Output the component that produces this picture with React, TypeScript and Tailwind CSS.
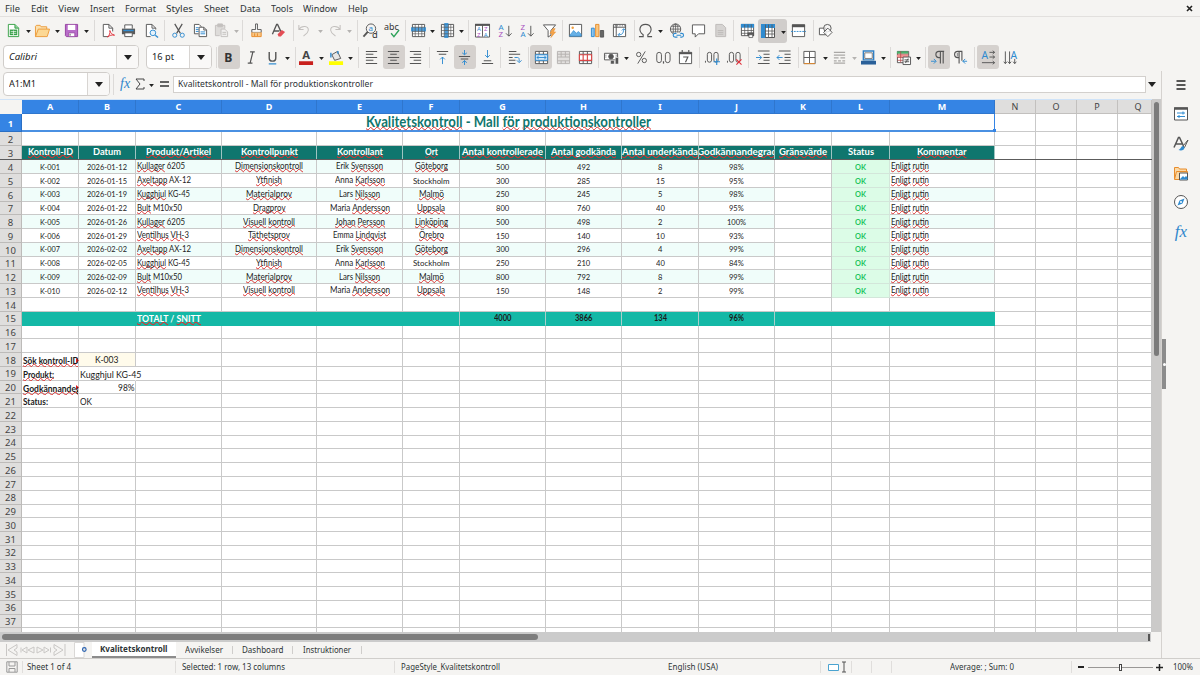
import React, { useLayoutEffect, useRef, useState } from "react";

type Node = React.ReactNode;

/* Text condensed or widened to a given width. "~" toggles the spelling mark. */
function Fit({ text, w, className = "" }: { text: string; w: number; className?: string }) {
  const ref = useRef<HTMLSpanElement>(null);
  const [k, setK] = useState(1);
  useLayoutEffect(() => {
    if (ref.current) setK(w / ref.current.getBoundingClientRect().width);
  }, []);
  return (
    <span className={"inline-flex shrink-0 justify-start whitespace-pre " + className} style={{ width: w }}>
      <span ref={ref} className="inline-block shrink-0 origin-left" style={{ transform: `scaleX(${k})` }}>
        {text.split("~").map((part, i) =>
          i % 2 === 1 ? (
            <span key={i} className="underline decoration-[#dc3030] decoration-wavy decoration-[0.7px] underline-offset-[-1px] [text-decoration-skip-ink:none]">
              {part}
            </span>
          ) : (
            part
          )
        )}
      </span>
    </span>
  );
}

/* Row of tools, each given by its centre, width and content. */
type Item = [number, number, Node];
function Strip({ items, className }: { items: Item[]; className: string }) {
  let end = 0;
  return (
    <div className={"flex shrink-0 items-center " + className}>
      {items.map(([c, w, node], i) => {
        const ml = c - w / 2 - end;
        end = c + w / 2;
        return (
          <div key={i} className="flex h-full shrink-0 items-center justify-center" style={{ width: w, marginLeft: ml }}>
            {node}
          </div>
        );
      })}
    </div>
  );
}

const Svg = ({ children, s = 16 }: { children: Node; s?: number }) => (
  <svg width={s} height={s} viewBox="0 0 16 16" fill="none" stroke="#555" strokeWidth="1" className="shrink-0 overflow-visible">
    {children}
  </svg>
);
const Caret = ({ off = false, big = false }: { off?: boolean; big?: boolean }) => (
  <svg width={big ? 8 : 5} height={big ? 5 : 3} viewBox="0 0 8 5" className="shrink-0">
    <path d="M0 0h8L4 5z" fill={off ? "#b5b3b1" : "#222"} />
  </svg>
);
const Sep = () => <div className="h-[21px] w-px bg-[#dcdad8]" />;
const Pressed = ({ children }: { children: Node }) => (
  <div className="flex h-[24px] w-[22px] items-center justify-center rounded-[3px] bg-[#d5d1ce]">{children}</div>
);
const sep = (x: number): Item => [x, 1, <Sep />];
const car = (x: number, off = false): Item => [x, 5, <div className="pt-[2px]"><Caret off={off} /></div>];
const ic = (x: number, n: Node): Item => [x, 16, <Svg s={15}>{n}</Svg>];
const on = (x: number, n: Node): Item => [x, 22, <Pressed><Svg s={15}>{n}</Svg></Pressed>];

const B = "#2f8bd0";
const P = "#a94fc0";
const glyph = (x: number, y: number, t: string, fill: string, size: number, extra = "") => (
  <text x={x} y={y} fill={fill} stroke="none" fontSize={size} className={"font-['Noto_Sans',sans-serif] " + extra}>{t}</text>
);

const tools1: Item[] = [
  ic(13, <><path d="M2.5 1.5h7l4 4v9h-11z" fill="#fff" stroke="#37a048" /><path d="M9.5 1.5v4h4" stroke="#37a048" fill="#8ed39a" /><path d="M4 7h8v6H4z" fill="#37a048" stroke="none" /><path d="M5 9h6M5 11h6M8 8v5" stroke="#fff" strokeWidth=".7" /></>),
  car(28),
  ic(42, <><path d="M.5 14.500V3.500l1-1h4l1 1.500h6v3" fill="#fbe0ae" stroke="#ec9b3a" /><path d="M.5 14.500l3-8h12l-2.500 8z" fill="#fcd894" stroke="#ec9b3a" /></>),
  car(57),
  ic(71.5, <><path d="M1.500 1.500h13v13h-12l-1-1z" fill="#b86cc9" stroke="#94409f" /><path d="M4 2h8v5.500H4z" fill="#fff" stroke="none" /><path d="M5 10.500h6.500v4H5z" fill="#fff" stroke="#94409f" strokeWidth=".8" /><path d="M6.500 11.500v2" /></>),
  car(86.5),
  sep(94),
  ic(107.5, <><path d="M9 14.500H3.500v-13h6l4 4V9" fill="#fff" /><path d="M9.500 1.500v4h4" /><path d="M8 15c2-2 3-4 2.500-7 1 3 2 4 5 5-3-.5-5 0-7.500 2z" stroke="#e0303a" /></>),
  ic(128.5, <><path d="M4 6V2h8v4" fill="#fff" /><path d="M1 6h14v6H1z" fill="#5a5a5a" stroke="none" /><path d="M2.500 8h11" stroke={B} strokeWidth="1.500" /><path d="M4 10.500h8v4H4z" fill="#fff" /></>),
  ic(151, <><path d="M7 14.500H2.500v-13h6l4 4V7" fill="#fff" /><path d="M8.500 1.500v4h4" /><circle cx="9.500" cy="10.500" r="3" stroke={B} fill="#e5f2fb" /><path d="M12 13l3 2.500" stroke={B} strokeWidth="1.500" /></>),
  sep(164),
  ic(178, <><path d="M4 1l6 10M12 1L6 11" strokeWidth="1.300" /><circle cx="4" cy="13" r="2.200" stroke={B} /><circle cx="12" cy="13" r="2.200" stroke={B} /></>),
  ic(200, <><path d="M6 11.500H1.500v-10h5l2 2v1.500" fill="#fff" /><path d="M3 5h3M3 7h3M3 9h3" stroke={B} /><path d="M6.500 4.500h5l3 3v7h-8z" fill="#fff" /><path d="M11.500 4.500v3h3" /><path d="M8 9.500h5M8 11.500h5" stroke={B} /></>),
  ic(221.5, <g stroke="#c3c0be"><path d="M6 13.500H1.500v-11h10V6" fill="#dedcda" /><path d="M4 1h5v3H4z" fill="#c3c0be" /><path d="M7.500 6.500h4l3 3v5h-7z" fill="#f1f0ef" /><path d="M9 10h4M9 12h4" /></g>),
  car(236, true),
  sep(242),
  ic(256, <><path d="M7 1h2v6h4v3H3V7h4z" fill="#fff" /><path d="M3 10v4.500h10V10" fill="#f9c684" stroke="#e88c2b" /><path d="M6 11v3M9 11v3" stroke="#e88c2b" /></>),
  ic(278, <><path d="M1.500 12L6 1.500h1L11 10M3 8.500h6" strokeWidth="1.400" /><path d="M7 12l4.500-4.500 3.500 2-4.500 5H8z" fill="#e44d55" stroke="none" /></>),
  sep(293),
  ic(304.5, <path d="M2 2v5h5M2 7c3-5 11-4 10 1-.5 3-3 4-5 6" stroke="#c3c0be" strokeWidth="1.100" />),
  car(320, true),
  ic(334, <path d="M14 2v5H9M14 7C11 2 3 3 4 8c.5 3 3 4 5 6" stroke="#c3c0be" strokeWidth="1.100" />),
  car(349, true),
  sep(357),
  ic(370, <><circle cx="8.500" cy="6" r="5" /><path d="M5 9.500L.5 14.500" strokeWidth="2" />{glyph(5.8, 8.5, "a", B, 8.5)}{glyph(9.5, 15.5, "d", "#333", 10)}</>),
  ic(392, <>{glyph(-1, 7.5, "abc", "#333", 9.5)}<path d="M6.500 11l3 3.500 5.500-7" stroke="#2fa35a" strokeWidth="1.500" /></>),
  sep(405),
  ic(418, <><path d="M1.500 1.500h13v13h-13z" fill="#fff" /><path d="M0 4.500h16v4.500H0z" fill={B} stroke="none" opacity=".85" /><path d="M1.500 4.500h13M1.500 9h13M1.500 11.500h13M4.500 1.500v13M8 1.500v13M11.500 1.500v13" strokeWidth=".7" /></>),
  car(432.5),
  ic(447, <><path d="M1.500 1.500h13v13h-13z" fill="#fff" /><path d="M4.500 0h4.500v16H4.500z" fill={B} stroke="none" opacity=".85" /><path d="M1.500 4.500h13M1.500 8h13M1.500 11.500h13M4.500 1.500v13M9 1.500v13M11.500 1.500v13" strokeWidth=".7" /></>),
  car(461.5),
  sep(468),
  ic(482, <><path d="M.5 1.500h15v13.500H.5zM8 2v12.500" fill="#fff" /><path d="M0 2h16" strokeWidth="2.200" />{glyph(2, 9, "A", B, 6.5)}{glyph(2.2, 14.6, "Z", P, 6.5)}{glyph(9.6, 9, "Z", P, 6.5)}{glyph(9.4, 14.6, "A", B, 6.5)}</>),
  ic(505, <>{glyph(0.5, 7, "A", B, 8.5)}{glyph(0.5, 15, "Z", P, 8.5)}<path d="M11.500 3v11M8.500 11l3 3 3-3" /></>),
  ic(527, <>{glyph(0.5, 7, "Z", P, 8.5)}{glyph(0.5, 15, "A", B, 8.5)}<path d="M11.500 3v11M8.500 11l3 3 3-3" /></>),
  ic(549, <><path d="M1.500 2h13l-5 6v5l-3 2V8z" fill="#fff" /><path d="M11.500 6l-3 5h2.500l-1.500 4.500 5-6H12l2-3.500z" fill="#f7a54a" stroke="#e88c2b" strokeWidth=".6" /></>),
  sep(562),
  ic(575.5, <><path d="M1.500 1.500h13v13h-13z" fill="#fff" /><path d="M2 13l4-5 3 3 2-2 3 3v2H2z" fill="#67b0e6" stroke={B} strokeWidth=".7" /><circle cx="5" cy="5" r="1.300" fill="#f0a040" stroke="none" /></>),
  ic(597.5, <><path d="M1.500 5.500h3v9h-3z" fill="#8cc4ee" stroke={B} /><path d="M6 1.500h3.500v13H6z" fill="#fac880" stroke="#e88c2b" /><path d="M11 8h3.500v7H11z" fill="#666" stroke="#555" /></>),
  ic(619.5, <><path d="M1.500 1.500h13v13h-13z" fill="#fff" /><path d="M1.500 4.500h13M4.500 1.500v13" /><path d="M3 3h11" strokeDasharray="1 1.500" /><path d="M7 12.500c4 0 5-1 5.500-6M10.500 8l2-2 2 2M8.500 10.500l-2 2 2 2" stroke={B} /></>),
  sep(634),
  ic(645, <path d="M1 14.500h4.500v-2C-.5 8 2 1.500 8 1.500s8.500 6.500 2.500 11v2H15" strokeWidth="1.200" />),
  car(660.5),
  ic(676, <><circle cx="7" cy="6.500" r="5.500" /><path d="M1.500 6.500h11M7 1v11M2.500 3.500h9M2.500 9.500h9" strokeWidth=".8" /><ellipse cx="7" cy="6.500" rx="2.500" ry="5.500" strokeWidth=".8" /><path d="M5 10.200h10v5.500H5z" fill="#f5f4f2" stroke="none" /><path d="M8 11H6.500a2 2 0 000 4H9M12 11h1.500a2 2 0 010 4H12M8 13h5" stroke={B} strokeWidth="1.200" /></>),
  ic(698, <path d="M1.500 2h13v9.500H8L4.500 15v-3.500h-3z" fill="#fff" />),
  ic(720, <><path d="M3 1.500h7l3.500 3.500v9.500H3z" fill="#d6d4d2" stroke="#bdbab8" /><path d="M5 8h6M5 10h6M5 12h6" stroke="#bdbab8" /></>),
  sep(733),
  ic(747, <><path d="M1.500 1.500h13v12h-13z" fill="#fff" /><path d="M1 1h14v4H1z" fill={B} stroke="none" /><path d="M1.500 8h13M1.500 11h13M5 1.500v12M8.500 1.500v12M12 1.500v12" strokeWidth=".8" /><path d="M8 10h7v4H8z" fill="#555" stroke="none" /><path d="M9.500 12.500h4v3h-4z" fill="#fff" strokeWidth=".8" /></>),
  [772.5, 29, <div className="flex h-[24px] w-[29px] items-center gap-[5px] rounded-[3px] bg-[#d0cdcb] pl-[2px]"><Svg><path d="M1.500 1.500h13v13h-13z" fill="#fff" /><path d="M1 1h14v4H1zM1 1h4.500v14H1z" fill={B} stroke="none" /><path d="M5 8h9.500M5 11h9.500M8.500 1.500v13M12 1.500v13M5.500 1.500v13" strokeWidth=".8" /></Svg><div className="pt-[3px]"><Caret /></div></div>],
  ic(798, <><path d="M1.500 2h13v12.500h-13z" fill="#fff" /><path d="M1 3h14" strokeWidth="3" /><path d="M0 9h16" stroke={B} strokeDasharray="2 1" /></>),
  sep(813),
  ic(825.5, <><path d="M1.500 5.500h7v7h-7z" fill="#fff" /><circle cx="10" cy="5.500" r="4" fill="#f5f4f3" fillOpacity=".7" /><path d="M10.500 5.500l4.500 4.500-4.500 4.500L6 10z" fill="#fff" fillOpacity=".8" /></>),
];

const L = (d: string) => <path d={d} strokeWidth="1.100" />;
const tools2: Item[] = [
  [71, 136, <Combo text="Calibri" tw={28} italic w="w-[136px]" aw="w-[22px]" />],
  [179, 66, <Combo text="16 pt" tw={22} w="w-[66px]" aw="w-[22px]" />],
  sep(216),
  on(228.5, glyph(3.5, 12.8, "B", "#333", 13, "font-bold")),
  ic(251, <path d="M6.500 2h5M4 14h5M9.500 2L6.500 14" strokeWidth="1.300" />),
  ic(272, <><path d="M4.500 2v6.500c0 4.500 7 4.500 7 0V2" strokeWidth="1.500" /><path d="M4 14.800h8" stroke={B} strokeWidth="1.300" /></>),
  car(287),
  sep(295),
  ic(306, <>{glyph(3.5, 9.5, "A", "#444", 12, "font-bold")}<path d="M0 12h15v4H0z" fill="#c9211e" stroke="none" /></>),
  car(321.5),
  ic(336, <><path d="M3 5l6-3.500L12.500 9 6 11z" fill="#e6e6e6" /><path d="M9.500 1v3M2 3v5" stroke={B} strokeWidth="1.500" /><path d="M0 12h15v4H0z" fill="#ffff00" stroke="none" /></>),
  car(350.5),
  sep(358),
  ic(371.5, L("M2 1.500h12M2 4.500h8M2 8h12M2 11h8M2 14.500h12")),
  on(393.5, L("M2 1.500h12M4.500 4.500h7M2 8h12M4.500 11h7M2 14.500h12")),
  ic(415, L("M2 1.500h12M6 4.500h8M2 8h12M6 11h8M2 14.500h12")),
  sep(429),
  ic(442.5, <>{L("M2 1.500h12M4 4.500h8")}<path d="M8 15V7.500M5.500 10L8 7.500l2.500 2.500" stroke={B} /></>),
  on(464.5, <>{L("M2 7h12M4 9.500h8")}<path d="M8 0v5M5.500 3L8 5l2.500-2M8 16v-5M5.500 13.500L8 11.500l2.500 2" stroke={B} /></>),
  ic(487, <>{L("M4 11.500h8M2 14.500h12")}<path d="M8 0v8M5.500 5.500L8 8l2.500-2.500" stroke={B} /></>),
  sep(500),
  ic(514, <>{L("M2 1.500h8M2 4.500h12M2 8h4M2 11h7M2 14.500h7")}<path d="M8 8h3c2 0 2 1 2 4.500M10.500 11l2.500 2.500 2.500-2.500" stroke={B} /></>),
  sep(528),
  on(541, <><path d="M1.500 1.500h13v13h-13zM1.500 4.500h13M1.500 11.500h13M5.500 1.500v3M10 1.500v3M5.500 11.500v3M10 11.500v3" fill="#fff" /><path d="M1.500 5h13v6h-13z" fill="#d6ebfa" stroke={B} /><path d="M3 8h10M5 6.500L3 8l2 1.500M11 6.500L13 8l-2 1.500" stroke={B} /></>),
  ic(563, <path d="M1.500 1.500h13v13h-13zM1.500 4.500h13M1.500 7.500h13M1.500 11.500h13M5.500 1.500v6M10 1.500v6M5.500 11.500v3M10 11.500v3" fill="#e2e0de" stroke="#b5b2b0" />),
  ic(585, <><path d="M1.500 1.500h13v13h-13zM1.500 4.500h13M5.500 1.500v13M10 1.500v13M1.500 11.500h13" fill="#fff" /><path d="M1.500 5h13v6h-13zM5.500 5v6M10 5v6" fill="#fff" stroke="#d94545" strokeWidth="1.200" /></>),
  sep(598),
  ic(611, <><path d="M.5 3.500h14v7H.5z" fill="#fff" /><circle cx="7.500" cy="7" r="2.500" fill="#555" /><path d="M2 5v4M13 5v4" strokeDasharray="1 1" /><path d="M7 11h4v4H7zM12 8h3.500v7H12z" fill="#555" stroke="#f5f4f3" strokeWidth=".6" /></>),
  car(626),
  ic(641.5, <><circle cx="5" cy="4.800" r="2.300" /><circle cx="11" cy="11.200" r="2.300" /><path d="M12 1.500L4 14.500" /></>),
  ic(663.5, <><rect x=".8" y="2.500" width="5" height="11" rx="2.500" /><rect x="10" y="2.500" width="5" height="11" rx="2.500" /><path d="M8 12v2.500" strokeWidth="1.300" /></>),
  ic(685.5, <><path d="M1.500 2.500h13v12h-13z" fill="#fff" /><path d="M1 3.500h14" strokeWidth="2" /><path d="M4.500 0v2M11.500 0v2M5.500 7.500h5l-2.500 5.500" strokeWidth="1.200" /></>),
  sep(699),
  ic(712.5, <><path d="M.5 11.500v2" /><rect x="2.500" y="2.500" width="4.500" height="10.500" rx="2.200" /><rect x="9.500" y="2.500" width="4.500" height="10.500" rx="2.200" /><path d="M12.500 9v7M9 12.500h7" stroke={B} strokeWidth="1.200" /></>),
  ic(734.5, <><path d="M.5 11.500v2" /><rect x="2.500" y="2.500" width="4.500" height="10.500" rx="2.200" /><rect x="9.500" y="2.500" width="4.500" height="10.500" rx="2.200" /><path d="M10 10l5.500 5.500M15.500 10L10 15.500" stroke="#e0303a" strokeWidth="1.200" /></>),
  sep(748),
  ic(763, <>{L("M2 1h12.500M8 4.500h6.500M8 8h6.500M8 11h6.500M2 14.500h12.500")}<path d="M0 8h6M3.500 5.500L6 8l-2.500 2.500" stroke={B} /></>),
  ic(784, <>{L("M2 1h12.500M8 4.500h6.500M8 8h6.500M8 11h6.500M2 14.500h12.500")}<path d="M0 8h6M2.500 5.500L0 8l2.500 2.500" stroke={B} /></>),
  sep(798),
  ic(809.5, <><path d="M2 1.500h12v13H2zM8 2v12M2 8h12" fill="#fff" /><path d="M2 14.500h12" stroke="#e88c2b" /></>),
  car(825),
  ic(839, <path d="M2 2.500h12M2 5.500h12M2 8.500h5M9 8.500h5M2 11.500h3M6.500 11.500h3M11 11.500h3M2 14h12" stroke="#aaa8a6" strokeWidth="1.300" />),
  car(854, true),
  ic(868, <><path d="M2.500 1h11v9.500h-11z" fill="#fff" stroke="#2f7fc4" strokeWidth="1.500" /><path d="M4 3h8v6H4z" stroke="#777" /><path d="M0 11.500h16v4H0z" fill="#2a6099" stroke="none" /></>),
  car(883),
  sep(890),
  ic(903, <><path d="M1.500 1.500h12v12h-12z" fill="#fff" /><path d="M1 1.500h12v2.500H1z" fill="#46b36b" stroke="none" /><path d="M1 5h12v2.500H1z" fill="#f09090" stroke="none" /><path d="M1.500 4.500h12M1.500 8h12M1.500 11h8M5 1.500v12" stroke="#b5484a" strokeWidth=".8" /><path d="M7.500 7.500h8v8h-8z" fill="#fff" /><path d="M9 10.500h5M9 12.500h5M13 9l-3 5" /></>),
  car(918),
  sep(925),
  on(938.5, <><path d="M14 1.500H8.500a3.300 3.300 0 000 6.600H10M10 1.500v13M13 1.500v13" strokeWidth="1.200" /><path d="M0 12h5M3 9.500L5.500 12 3 14.500" stroke={B} /></>),
  ic(960.5, <><path d="M10 1.500H5a3.300 3.300 0 000 6.600h1.500M6.500 1.500v13M9.500 1.500v10" strokeWidth="1.200" /><path d="M4 3h2v4H4z" fill="#999" stroke="none" /><path d="M15 12h-4.500M13 9.500L10.500 12l2.500 2.500" stroke={B} /></>),
  sep(974),
  on(988, <>{glyph(0.5, 10, "A", B, 11)}<path d="M9 2.500h5.500M12.500.8l2 1.700-2 1.700M9 7.500h5.500M12.500 5.800l2 1.700-2 1.700M1 13.500h13.500M12.500 11.800l2 1.700-2 1.700" /></>),
  ic(1010, <>{glyph(8, 9.5, "A", B, 11)}<path d="M2.500 1.500v13M.8 12.500l1.700 2 1.700-2M7 1.500v13M5.300 12.500l1.700 2 1.700-2M12.500 9.500v5M10.800 12.500l1.700 2 1.700-2" /></>),
];

function Combo({ text, tw, w, aw, italic }: { text: string; tw: number; w: string; aw: string; italic?: boolean }) {
  return (
    <div className={"flex h-[24px] overflow-hidden rounded-[4px] border border-[#d0cdca] bg-white text-[9.800px] text-[#222] " + w}>
      <div className="flex grow items-center pl-[5px]">
        <Fit text={text} w={tw} className={italic ? "italic" : ""} />
      </div>
      <div className={"flex items-center justify-center border-l border-[#d8d5d2] bg-[#f9f8f7] " + aw}>
        <Caret big />
      </div>
    </div>
  );
}

const Fx = ({ className }: { className: string }) => (
  <span className={"font-['Liberation_Serif',serif] italic leading-none text-[#2f86cc] " + className}>fx</span>
);

const cols: [string, string][] = [
  ["A", "w-[57px]"], ["B", "w-[57px]"], ["C", "w-[86px]"], ["D", "w-[95px]"], ["E", "w-[86px]"], ["F", "w-[57px]"],
  ["G", "w-[86px]"], ["H", "w-[76px]"], ["I", "w-[77px]"], ["J", "w-[76px]"], ["K", "w-[57px]"], ["L", "w-[58px]"],
  ["M", "w-[105px]"], ["N", "w-[41px]"], ["O", "w-[41px]"], ["P", "w-[41px]"], ["Q", "w-[34px]"],
];

const heads: [string, number, boolean?][] = [
  ["~Kontroll-ID~", 45], ["Datum", 28, true], ["~Produkt/Artikel~", 65], ["~Kontrollpunkt~", 57], ["~Kontrollant~", 46],
  ["~Ort~", 13], ["~Antal kontrollerade~", 81], ["~Antal godkända~", 65], ["~Antal underkända~", 76], ["~Godkännandegrad~", 80],
  ["~Gränsvärde~", 48], ["Status", 26, true], ["~Kommentar~", 49.5],
];

const products: Record<string, [string, number]> = {
  k: ["~Kullager~ 6205", 48], a: ["~Axeltapp~ AX-12", 54], g: ["~Kugghjul~ KG-45", 53], b: ["~Bult~ M10x50", 45], v: ["~Ventilhus~ ~VH-~3", 52],
};
const checks: Record<string, [string, number]> = {
  d: ["~Dimensionskontroll~", 68], y: ["~Ytfinish~", 26], m: ["~Materialprov~", 46], r: ["~Dragprov~", 32.5], v: ["~Visuell~ ~kontroll~", 52], t: ["~Täthetsprov~", 42],
};
const people: Record<string, [string, number]> = {
  e: ["Erik ~Svensson~", 47], a: ["Anna ~Karlsson~", 50], l: ["Lars ~Nilsson~", 41], m: ["Maria ~Andersson~", 60], j: ["~Johan~ ~Persson~", 50], q: ["Emma ~Lindqvist~", 53],
};
const places: Record<string, [string, number]> = {
  g: ["~Göteborg~", 33], s: ["Stockholm", 36.5], m: ["~Malmö~", 25], u: ["~Uppsala~", 28], l: ["~Linköping~", 33], o: ["~Örebro~", 25],
};
const rows: [string, string, string, string, string, string, string, string, string][] = [
  ["2026-01-12", "k", "d", "e", "g", "500", "492", "8", "98%"],
  ["2026-01-15", "a", "y", "a", "s", "300", "285", "15", "95%"],
  ["2026-01-19", "g", "m", "l", "m", "250", "245", "5", "98%"],
  ["2026-01-22", "b", "r", "m", "u", "800", "760", "40", "95%"],
  ["2026-01-26", "k", "v", "j", "l", "500", "498", "2", "100%"],
  ["2026-01-29", "v", "t", "q", "o", "150", "140", "10", "93%"],
  ["2026-02-02", "a", "d", "e", "g", "300", "296", "4", "99%"],
  ["2026-02-05", "g", "y", "a", "s", "250", "210", "40", "84%"],
  ["2026-02-09", "b", "m", "l", "m", "800", "792", "8", "99%"],
  ["2026-02-12", "v", "v", "m", "u", "150", "148", "2", "99%"],
];
const numW = (s: string) => (s.endsWith("%") ? (s.length - 1) * 4.3 + 6.2 : s.length * 4.4);

function Cell({ w, children, className = "", line = "border-[#c9c9c9]" }: { w: string; children?: Node; className?: string; line?: string }) {
  return (
    <div className={"flex h-full shrink-0 items-center border-r border-b " + w + " " + line + " " + className}>{children}</div>
  );
}

function content(n: number, c: number): { node?: Node; cls?: string; line?: string } {
  if (n === 3 && c < 13) {
    const [t, w, big] = heads[c];
    return {
      node: <Fit text={t} w={w} className={"font-bold text-white " + (big ? "text-[9.500px]" : "text-[8.500px]")} />,
      cls: "bg-[#0f766e] justify-center overflow-hidden " + (big ? "pb-[2px]" : "pb-px"),
      line: "border-r-[#9fc4c1] border-b-[#0f766e]",
    };
  }
  if (n >= 4 && n <= 13 && c < 13) {
    const r = rows[n - 4];
    const stripe = n % 2 === 0 && c !== 10 ? "bg-[#f0fdfa] " : "";
    const mid = stripe + "justify-center ";
    const id = "K-0" + String(n - 3).padStart(2, "0");
    const num = (t: string) => ({ node: <Fit text={t} w={numW(t)} className="text-[8px]" />, cls: mid });
    const named = ([t, w]: [string, number]) => ({
      node: <Fit text={t} w={w} className={t.includes("~") ? "text-[8.500px]" : "text-[8px]"} />,
      cls: mid,
    });
    switch (c) {
      case 0: return { node: <Fit text={id} w={20} className="text-[8px]" />, cls: mid };
      case 1: return { node: <Fit text={r[0]} w={40} className="text-[8px]" />, cls: mid };
      case 2: return { ...named(products[r[1]]), cls: stripe + "pl-[1px]" };
      case 3: return named(checks[r[2]]);
      case 4: return named(people[r[3]]);
      case 5: return named(places[r[4]]);
      case 6: return num(r[5]);
      case 7: return num(r[6]);
      case 8: return num(r[7]);
      case 9: return num(r[8]);
      case 11: return { node: <Fit text="OK" w={11} className="text-[8px] font-bold text-[#22c55e]" />, cls: "bg-[#dcfce7] justify-center", line: "border-[#d3e6da]" };
      case 12: return { node: <Fit text="~Enligt~ ~rutin~" w={38} className="text-[8.500px]" />, cls: stripe + "pl-px" };
      default: return {};
    }
  }
  if (n === 15 && c < 13) {
    const total = ["4000", "3866", "134", "96%"][c - 6];
    const edge = c >= 5 && c <= 9;
    return {
      node: c === 2 ? <Fit text="~TOTALT~ / ~SNITT~" w={64} className="text-[8.500px] font-bold text-white" />
        : total ? <Fit text={total} w={total === "4000" || total === "3866" ? 17.5 : total === "134" ? 13 : 15} className="text-[8.500px] font-bold" /> : null,
      cls: "bg-[#14b8a6] " + (c === 2 ? "pl-px pt-[3px]" : "justify-center"),
      line: (edge ? "border-r-[#a9cfca]" : "border-r-[#14b8a6]") + " border-b-[#14b8a6]",
    };
  }
  const label: Record<number, [string, number]> = {
    18: ["~Sök kontroll-ID:~", 58], 19: ["~Produkt:~", 31], 20: ["~Godkännandegrad:~", 72], 21: ["Status:", 25],
  };
  if (c === 0 && label[n]) {
    return {
      node: (
        <>
          <div className="flex h-[13px] w-[55px] shrink-0 items-center overflow-hidden pt-[2px]"><Fit text={label[n][0]} w={label[n][1]} className="text-[8.800px] font-bold" /></div>
          {n % 2 === 0 && <svg width="3" height="5" viewBox="0 0 3 5" className="-ml-[2px] shrink-0"><path d="M0 0v5l3-2.500z" fill="#e02020" /></svg>}
        </>
      ),
      cls: "pl-px pt-[2px]",
    };
  }
  if (c === 1) {
    if (n === 18) return { node: <Fit text="K-003" w={23.5} className="text-[9px]" />, cls: "bg-[#fffbeb] justify-center" };
    if (n === 19) return { node: <Fit text="Kugghjul KG-45" w={61.5} className="text-[9px]" />, cls: "pl-px pt-[2px]", line: "border-b-[#c9c9c9] border-r-transparent" };
    if (n === 20) return { node: <Fit text="98%" w={16.5} className="text-[9px]" />, cls: "justify-end pr-px pt-[1px]" };
    if (n === 21) return { node: <Fit text="OK" w={12} className="text-[9px]" />, cls: "pl-px pt-[1px]" };
  }
  return {};
}

function SheetRow({ n }: { n: number }) {
  return (
    <div className={"flex shrink-0 " + (n === 1 ? "h-[18px]" : n === 3 ? "h-[14.600px]" : "h-[13.770px]")}>
      <div className={"flex h-full w-[22px] shrink-0 items-center justify-center border-r border-b pt-[2px] text-[9.500px] leading-none font-['Noto_Sans',sans-serif] " + (n === 1 ? "border-[#2a6fc4] bg-[#3584e4] font-bold text-white" : "border-[#bdbbb9] bg-[#dfdedd] text-[#444]")}>
        {n <= 37 ? n : null}
      </div>
      {n === 1 ? (
        <>
          <div className="relative flex w-[973px] shrink-0 items-center justify-center border-r border-b-2 border-[#3584e4] border-b-[#4a90e2]">
            <Fit text="~Kvalitetskontroll~ - Mall ~för~ ~produktionskontroller~" w={285} className="text-[14.500px] font-bold text-[#0f766e]" />
            <div className="absolute -right-[2px] -bottom-[2px] size-[3px] bg-[#3584e4]" />
          </div>
          {cols.slice(13).map(([k, w]) => <Cell key={k} w={w} />)}
        </>
      ) : (
        cols.map(([k, w], c) => {
          const { node, cls, line } = content(n, c);
          return <Cell key={k} w={w} className={cls} line={line}>{node}</Cell>;
        })
      )}
    </div>
  );
}

const menus: [string, number][] = [
  ["File", 15], ["Edit", 17], ["View", 21], ["Insert", 24.5], ["Format", 31], ["Styles", 27], ["Sheet", 25], ["Data", 20.5], ["Tools", 22], ["Window", 34], ["Help", 20],
];

export default function App() {
  return (
    <div className="flex h-[675px] w-[1200px] flex-col overflow-hidden bg-[#f5f4f2] font-['Noto_Sans',sans-serif] text-[9.600px] leading-none text-[#2e3436]">
      <header className="flex h-[17px] shrink-0 items-center gap-[10.600px] border-b border-[#e2e0de] pt-px pl-[5px]">
        {menus.map(([t, w]) => <Fit key={t} text={t} w={w} />)}
        <svg width="7" height="7" viewBox="0 0 7 7" className="mr-[7px] ml-auto"><path d="M1 1l5 5M6 1L1 6" stroke="#222" strokeWidth="1.600" /></svg>
      </header>
      <Strip className="h-[27px]" items={tools1} />
      <Strip className="h-[27px] pb-px" items={tools2} />

      <div className="flex min-h-0 grow">
        <div className="flex w-[1161px] shrink-0 flex-col">
          <div className="flex h-[28px] shrink-0 items-center pb-[2px] pl-[3px]">
            <Combo text="A1:M1" tw={27} w="w-[107px]" aw="w-[22px]" />
            <div className="ml-[3px]"><Sep /></div>
            <Fx className="ml-[6px] w-[11px] text-[14px]" />
            <svg width="10" height="12" viewBox="0 0 10 12" className="ml-[4px]"><path d="M9 3V1H1l4 5-4 5h8V9" fill="none" stroke="#444" /></svg>
            <div className="ml-[4px] pt-[2px]"><Caret /></div>
            <svg width="9" height="6" viewBox="0 0 9 6" className="ml-[6px]"><path d="M0 1h9M0 5h9" stroke="#333" strokeWidth="1.400" /></svg>
            <div className="ml-[4px] flex h-[17px] w-[973px] items-center border border-[#d3d0cd] bg-white pl-[4px]">
              <Fit text="Kvalitetskontroll - Mall för produktionskontroller" w={195} />
            </div>
            <div className="ml-[2px]"><Caret big /></div>
          </div>

          <div className="flex h-[533px] shrink-0">
            <div className="flex w-[1152px] shrink-0 flex-col overflow-hidden bg-white">
              <div className="flex h-[15px] shrink-0 border-t border-[#cfe3f8]">
                <div className="w-[22px] shrink-0 bg-[#f5f4f2]" />
                {cols.map(([k, w], i) => (
                  <div key={k} className={"flex shrink-0 items-center justify-center border-r border-b text-[9px] " + w + (i < 13 ? " border-[#2f76cd] bg-[#3584e4] font-bold text-white" : " border-[#c2c0be] bg-[#dfdedd] text-[#444]") + (i === 16 ? " pl-[7px]" : "")}>
                    {k}
                  </div>
                ))}
              </div>
              <div className="flex flex-col font-[Lato,sans-serif] text-[#1c1c1c]">
                {[1, 2, 3].map((n) => <SheetRow key={n} n={n} />)}
                <div className="relative -mt-px h-px w-full shrink-0 bg-[#5c5c5c]" />
                {Array.from({ length: 35 }, (_, i) => <SheetRow key={i} n={i + 4} />)}
              </div>
            </div>
            <div className="flex w-[9px] flex-col items-center bg-[#cbcac9] pt-[3px]">
              <div className="h-[254px] w-[5px] rounded-full bg-[#7b7b7b]" />
            </div>
          </div>

          <div className="flex h-[10px] w-[1151px] shrink-0 items-center justify-between bg-[#cbcbcb] pr-[1px] pl-[2px]">
            <div className="h-[6px] w-[536px] rounded-full bg-[#7d7d7d]" />
            <div className="h-[7px] w-[2px] bg-[#555]" />
          </div>

          <div className="flex h-[16px] shrink-0 items-center">
            <svg width="62" height="14" viewBox="0 0 62 14" className="ml-[5px] shrink-0" fill="none" stroke="#c9c7c5" strokeWidth="1">
              <path d="M1.500 1v12M12 1.500L3 7l9 5.500V9L9 7l3-2zM16 4.500v5M22 4l-5 3 5 3zM29 4l-6 3 6 3zM32 4l6 3-6 3zM39 4l5 3-5 3zM45.500 4.500v5M49 1.500L58 7l-9 5.500V9l3-2-3-2zM60 1v12" />
            </svg>
            <svg width="14" height="16" viewBox="0 0 14 16" className="ml-[6px] shrink-0"><path d="M1.500.5h9.500v15H1.500z" fill="#fff" stroke="#dad8d6" /><circle cx="11.300" cy="7.500" r="1.800" fill="none" stroke="#2a62b0" strokeWidth="1.200" /></svg>
            <div className="ml-[5px] flex h-full w-[84px] items-center justify-center border-b-2 border-[#8c8c8c] bg-white font-bold">
              <Fit text="Kvalitetskontroll" w={67.5} />
            </div>
            <Fit text="Avvikelser" w={38} className="ml-[8.500px]" />
            <div className="ml-[9px] h-[8px] w-px bg-[#cfcdcb]" />
            <Fit text="Dashboard" w={41.5} className="ml-[9px]" />
            <div className="ml-[9px] h-[8px] w-px bg-[#cfcdcb]" />
            <Fit text="Instruktioner" w={48} className="ml-[9.500px]" />
            <div className="ml-[10px] h-[8px] w-px bg-[#cfcdcb]" />
          </div>
        </div>

        <aside className="flex grow border-l border-[#d5d2cf]">
          <div className="flex w-[4px] flex-col items-center pt-[268px]">
            <div className="flex h-[50px] w-[4px] items-center justify-center bg-[#8c8c8c]"><div className="size-[3px] rounded-full bg-white" /></div>
          </div>
          <div className="flex w-[30px] flex-col items-center gap-[13.300px] pt-[6px]">
            <Svg><path d="M3.500 4h9M3.500 8h9M3.500 12h9" stroke="#222" strokeWidth="1.500" /></Svg>
            <Svg><path d="M1.500 2h13v12h-13z" fill="#fff" /><path d="M1 2.500h14" strokeWidth="2.500" /><path d="M4 7h8M10 5.500v3M4 10.500h8M6 9v3" stroke={B} /></Svg>
            <Svg><path d="M1 11.500L5.500 1.500h1L11 11M3 8h6" strokeWidth="1.500" /><path d="M15 4l-5 6 1.500 1.500z" fill="#fff" /><path d="M10 10c-2 0-2 3-4.500 4 3 1 6 0 6-2.500z" fill={B} stroke="none" /></Svg>
            <Svg><path d="M1.500 14V2.500h4l1 1.500h7v3" fill="#fbd9a6" stroke="#e88c2b" /><path d="M1.500 14.500l2-8h11l-1 8z" fill="#fbd9a6" stroke="#e88c2b" /><path d="M6.500 8h8v7h-8z" fill="#fff" /><path d="M7 14l3-3 1.500 1.500L13 11l1.500 1.500v2H7z" fill={B} stroke="none" /></Svg>
            <Svg><circle cx="8" cy="8" r="6.500" fill="#fff" /><path d="M11.500 4.500L9.500 9.500l-5 2 2-5z" fill={B} stroke="none" /><circle cx="8" cy="8" r="1" fill="#fff" stroke="none" /></Svg>
            <Fx className="text-[17px]" />
          </div>
        </aside>
      </div>

      <footer className="h-[17px] shrink-0 border-t border-[#d0cecb]">
        <Strip
          className="h-full"
          items={[
            [12, 12, <svg width="12" height="12" viewBox="0 0 12 12" fill="none" stroke="#999"><path d="M.8.8h10.400v10.400H.8zM3 1v4h6V1M3 11V7.500h6V11" /></svg>],
            [22, 1, <div className="h-[12px] w-px bg-[#e0dedc]" />],
            [49, 44, <Fit text="Sheet 1 of 4" w={44} />],
            [175.5, 1, <div className="h-[12px] w-px bg-[#e0dedc]" />],
            [233.5, 103, <Fit text="Selected: 1 row, 13 columns" w={103} />],
            [394.5, 1, <div className="h-[12px] w-px bg-[#e0dedc]" />],
            [450, 100, <Fit text="PageStyle_Kvalitetskontroll" w={99} />],
            [693, 50, <Fit text="English (USA)" w={50} />],
            [820.5, 1, <div className="h-[12px] w-px bg-[#e0dedc]" />],
            [837, 22, <svg width="22" height="12" viewBox="0 0 22 12" fill="none"><path d="M2.500 3.500h10v6h-10z" fill="#fff" stroke="#4aa3d0" /><path d="M16 1h4M18 1v10M16 11h4" stroke="#555" /></svg>],
            [851.5, 1, <div className="h-[12px] w-px bg-[#e0dedc]" />],
            [871.5, 1, <div className="h-[12px] w-px bg-[#e0dedc]" />],
            [891.5, 1, <div className="h-[12px] w-px bg-[#e0dedc]" />],
            [982, 64, <Fit text="Average: ; Sum: 0" w={64} />],
            [1071.5, 1, <div className="h-[12px] w-px bg-[#e0dedc]" />],
            [1081, 7, <div className="h-[2px] w-[6px] bg-[#222]" />],
            [1120, 65, <div className="flex w-[65px] items-center"><div className="h-px grow bg-[#9a9896]" /><div className="h-[7px] w-[3px] border border-[#444] bg-white" /><div className="h-px grow bg-[#9a9896]" /></div>],
            [1159, 7, <svg width="7" height="7" viewBox="0 0 7 7"><path d="M0 3.500h7M3.500 0v7" stroke="#222" strokeWidth="1.500" /></svg>],
            [1183, 20, <Fit text="100%" w={20} />],
          ]}
        />
      </footer>
    </div>
  );
}
